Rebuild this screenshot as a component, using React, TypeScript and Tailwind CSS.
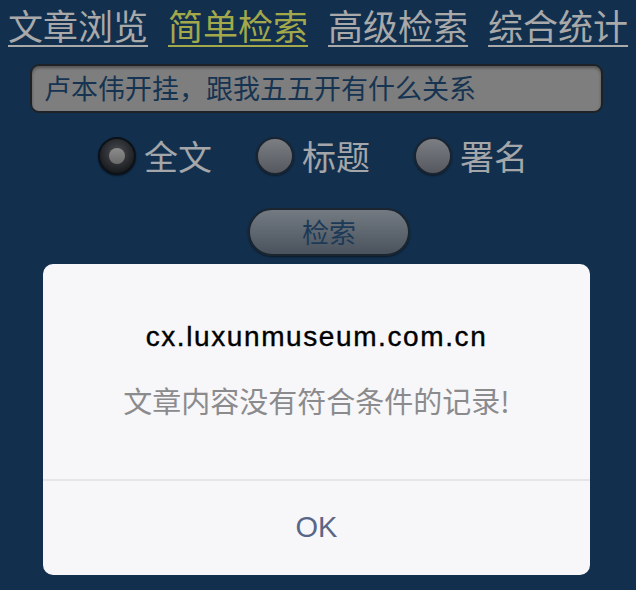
import React from "react";

const cjk = { fontFamily: '"Noto Sans CJK SC", "Noto Sans", sans-serif' };
const latin = { fontFamily: '"Liberation Sans", Arial, "Noto Sans CJK SC", sans-serif' };

function Radio({ checked, label }: { checked?: boolean; label: string }) {
  return (
    <div className="flex items-center gap-[8px]">
      {checked ? (
        <div className="flex h-[38px] w-[38px] items-center justify-center rounded-full border-2 border-[#0b1118] bg-[radial-gradient(circle_at_50%_40%,#4a4d52_0%,#1c1e22_70%,#0c0d10_100%)] shadow-[0_1px_2px_rgba(0,0,0,0.6)]">
          <div className="h-[16px] w-[16px] rounded-full bg-[linear-gradient(#8c8c8c,#6a6a6a)]" />
        </div>
      ) : (
        <div className="h-[38px] w-[38px] rounded-full border-2 border-[#1a2430] bg-[linear-gradient(#7b7e83,#55595f)] shadow-[0_1px_2px_rgba(0,0,0,0.5)]" />
      )}
      <span className="text-[34px] leading-none text-[#a4a6a9]">{label}</span>
    </div>
  );
}

export default function App() {
  return (
    <div className="relative h-[590px] w-[636px] overflow-hidden bg-[#12304e]" style={cjk}>
      <nav className="flex items-center gap-[20px] pl-[8px] pt-[3px] text-[35px] leading-[44px]">
        <a className="text-[#a9a9aa] underline decoration-[2px] underline-offset-[5px]">文章浏览</a>
        <a className="text-[#a3a84a] underline decoration-[2px] underline-offset-[5px]">简单检索</a>
        <a className="text-[#a9a9aa] underline decoration-[2px] underline-offset-[5px]">高级检索</a>
        <a className="text-[#a9a9aa] underline decoration-[2px] underline-offset-[5px]">综合统计</a>
      </nav>

      <div className="mt-[17px] px-[30px]">
        <div className="flex h-[49px] w-[573px] items-center rounded-[9px] border-2 border-[#1e2226] bg-[#7e7e7e] pl-[12px] text-[27px] text-[#163451] shadow-[inset_0_2px_3px_rgba(0,0,0,0.35)]">
          卢本伟开挂，跟我五五开有什么关系
        </div>
      </div>

      <div className="mt-[24px] flex items-center justify-center gap-[44px] pr-[10px]">
        <Radio checked label="全文" />
        <Radio label="标题" />
        <Radio label="署名" />
      </div>

      <div className="mt-[33px] flex justify-center pl-[22px]">
        <div className="flex h-[48px] w-[162px] items-center justify-center rounded-full border-2 border-[#1b2530] bg-[linear-gradient(#737a82,#4a535d)] text-[27px] text-[#1c3a57] shadow-[0_1px_2px_rgba(0,0,0,0.5)]">
          检索
        </div>
      </div>

      <div className="absolute left-[43px] top-[264px] flex h-[311px] w-[547px] flex-col rounded-[10px] bg-[#f7f7f9]">
        <div className="flex flex-1 flex-col items-center">
          <div
            className="mt-[55px] text-[28px] leading-[36px] tracking-[1.6px] text-black [-webkit-text-stroke:0.4px_black]"
            style={latin}
          >
            cx.luxunmuseum.com.cn
          </div>
          <div className="mt-[26px] text-[29px] leading-[38px] text-[#8b8b8d]">
            文章内容没有符合条件的记录!
          </div>
        </div>
        <div className="h-[2px] bg-[#e6e6ea]" />
        <div className="flex h-[94px] items-center justify-center text-[29px] text-[#5a6688]" style={latin}>
          OK
        </div>
      </div>
    </div>
  );
}
